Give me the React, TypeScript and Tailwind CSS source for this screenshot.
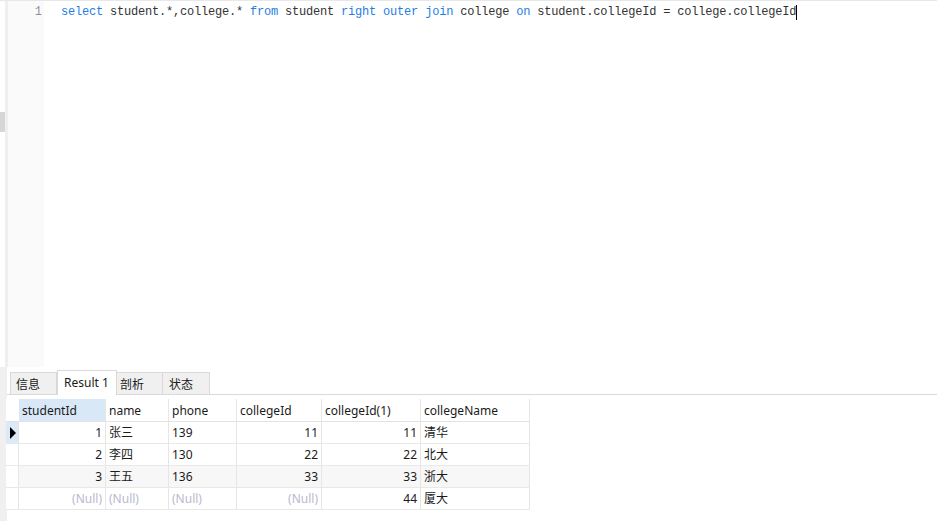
import React from "react";

const ui = { fontFamily: '"Noto Sans", "Noto Sans CJK SC", sans-serif' };
const mono = { fontFamily: '"Liberation Mono", "DejaVu Sans Mono", monospace' };

const cols = [
  { key: "studentId", w: "w-[87px]", num: true },
  { key: "name", w: "w-[63px]", num: false },
  { key: "phone", w: "w-[68px]", num: false },
  { key: "collegeId", w: "w-[85px]", num: true },
  { key: "collegeId(1)", w: "w-[99px]", num: true },
  { key: "collegeName", w: "w-[109px]", num: false },
];

const rows: (string | null)[][] = [
  ["1", "张三", "139", "11", "11", "清华"],
  ["2", "李四", "130", "22", "22", "北大"],
  ["3", "王五", "136", "33", "33", "浙大"],
  [null, null, null, null, "44", "厦大"],
];

function Kw({ children }: { children: React.ReactNode }) {
  return <span className="text-[#1f7ee6]">{children}</span>;
}

export default function App() {
  return (
    <div className="w-[937px] h-[521px] overflow-hidden bg-white flex flex-col text-[#1a1a1a]" style={ui}>
      {/* editor */}
      <div className="h-[367px] flex border-t border-[#e8e8e8]">
        <div className="w-[5px] flex flex-col">
          <div className="h-[111px]" />
          <div className="h-[20px] bg-[#d6d6d6]" />
        </div>
        <div className="w-[3px] bg-[#efefef]" />
        <div className="w-[36px] bg-[#fafafa] text-right pr-[2px] pt-[3px] text-[12px] leading-[17px] text-[#8e9296]" style={mono}>
          1
        </div>
        <div className="flex-1 pl-[17px] pt-[3px]">
          <div className="text-[12px] leading-[17px] tracking-[-0.2px] whitespace-pre text-[#333] flex items-center" style={mono}>
            <span>
              <Kw>select</Kw> student.*,college.* <Kw>from</Kw> student <Kw>right</Kw> <Kw>outer</Kw> <Kw>join</Kw> college <Kw>on</Kw> student.collegeId = college.collegeId
            </span>
            <span className="w-[1px] h-[15px] bg-black" />
          </div>
        </div>
      </div>

      {/* result panel */}
      <div className="flex-1 flex">
        <div className="w-[7px] bg-[#f0f0f0]" />
        <div className="flex-1 flex flex-col">
          {/* tabs */}
          <div className="mt-[3px] h-[25px] flex items-end border-b border-[#d9d9d9] pl-[3px] text-[12px]">
            <div className="h-[22px] w-[47px] bg-[#f0f0f0] border border-b-0 border-[#d9d9d9] pl-[5px] pt-[2px] leading-[19px]">信息</div>
            <div className="h-[25px] w-[60px] bg-white border border-b-0 border-[#d9d9d9] pl-[6px] pt-[1px] leading-[21px] -mb-px">Result 1</div>
            <div className="h-[22px] w-[46px] bg-[#f0f0f0] border border-l-0 border-b-0 border-[#d9d9d9] pl-[3px] pt-[2px] leading-[19px]">剖析</div>
            <div className="h-[22px] w-[47px] bg-[#f0f0f0] border border-l-0 border-b-0 border-[#d9d9d9] pl-[6px] pt-[2px] leading-[19px]">状态</div>
          </div>

          {/* grid */}
          <div className="mt-[4px] -ml-px w-fit flex flex-col text-[12px]">
            <div className="flex h-[23px] border-b border-[#e3e3e3]">
              <div className="w-[13px] bg-white" />
              {cols.map((c, i) => (
                <div
                  key={c.key}
                  className={`${c.w} border-r border-[#e6e6e6] pl-[3px] pt-[1px] leading-[22px] ${i === 0 ? "bg-[#d9e8f6]" : "bg-white"}`}
                >
                  {c.key}
                </div>
              ))}
            </div>
            {rows.map((r, ri) => (
              <div key={ri} className={`flex h-[22px] border-b border-[#e8e8e8] ${ri === 2 ? "bg-[#f7f7f7]" : "bg-white"}`}>
                <div className={`w-[13px] border-r border-[#e6e6e6] flex items-center pl-[4px] ${ri === 0 ? "bg-[#dce9f6]" : "bg-white"}`}>
                  {ri === 0 && <span className="block w-0 h-0 border-y-[6px] border-y-transparent border-l-[6px] border-l-black" />}
                </div>
                {cols.map((c, ci) => {
                  const v = r[ci];
                  return (
                    <div
                      key={c.key}
                      className={`${c.w} border-r border-[#e6e6e6] px-[3px] leading-[21px] ${c.num ? "text-right" : "text-left"} ${v === null ? "text-[#b9b9cf]" : ""}`}
                    >
                      {v === null ? "(Null)" : v}
                    </div>
                  );
                })}
              </div>
            ))}
          </div>
        </div>
      </div>
    </div>
  );
}
